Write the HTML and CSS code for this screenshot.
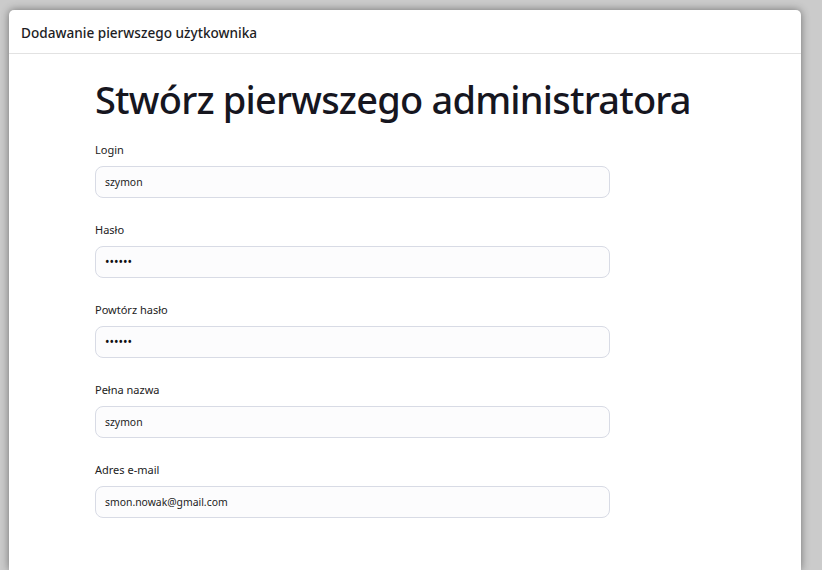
FILE: index.html
```html
<!DOCTYPE html>
<html lang="pl">
<head>
<meta charset="utf-8">
<link rel="stylesheet" href="styles.css">
</head>
<body>
<div class="window">
  <div class="window-header">Dodawanie pierwszego użytkownika</div>
  <div class="window-body">
    <h1 class="title">Stwórz pierwszego administratora</h1>
    <form class="form">
      <div class="field">
        <label class="label">Login</label>
        <div class="input">szymon</div>
      </div>
      <div class="field">
        <label class="label">Hasło</label>
        <div class="input password">••••••</div>
      </div>
      <div class="field">
        <label class="label">Powtórz hasło</label>
        <div class="input password">••••••</div>
      </div>
      <div class="field">
        <label class="label">Pełna nazwa</label>
        <div class="input">szymon</div>
      </div>
      <div class="field">
        <label class="label">Adres e-mail</label>
        <div class="input">smon.nowak@gmail.com</div>
      </div>
    </form>
  </div>
</div>
</body>
</html>
```
FILE: styles.css
```css
html, body {
  margin: 0;
  padding: 0;
  height: 100%;
  overflow: hidden;
}
body {
  background: #cbcbcb;
  font-family: "Noto Sans", "Open Sans", sans-serif;
  color: #212529;
  padding: 10px 0 0 9px;
  box-sizing: border-box;
}
.window {
  width: 792px;
  height: 560px;
  background: #fff;
  border-radius: 5px 5px 0 0;
  box-shadow: 0 0 8px rgba(0,0,0,0.45);
}
.window-header {
  height: 44px;
  box-sizing: border-box;
  border-bottom: 1px solid #e2e2e2;
  padding: 13px 0 0 12px;
  font-size: 13.6px;
  font-weight: 500;
  line-height: 20px;
  color: #1d1d24;
}
.window-body {
  padding: 22px 0 0 86px;
}
.title {
  margin: 0 0 20px;
  font-size: 38px;
  font-weight: 500;
  line-height: 46px;
  letter-spacing: -0.8px;
  color: #16161f;
}
.form {
  width: 515px;
  display: flex;
  flex-direction: column;
  gap: 24px;
}
.field {
  display: flex;
  flex-direction: column;
  gap: 8px;
}
.label {
  font-size: 11px;
  line-height: 16px;
  color: #222;
}
.input {
  height: 32px;
  flex: none;
  box-sizing: border-box;
  border: 1px solid #d8dbe5;
  border-radius: 8px;
  background: #fcfcfd;
  padding: 0 9px;
  font-size: 10.4px;
  line-height: 30px;
  color: #222;
}
.password {
  font-size: 12px;
  color: #111;
}
```
